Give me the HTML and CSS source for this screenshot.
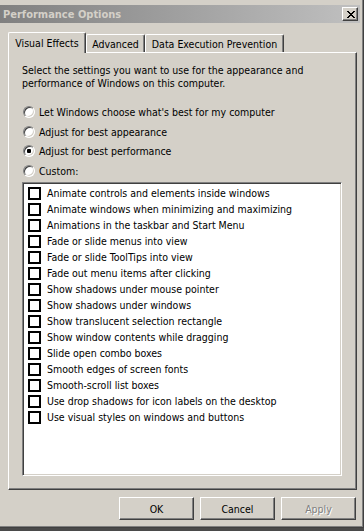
FILE: index.html
```html
<!DOCTYPE html>
<html>
<head>
<title>Performance Options</title>
<link rel="stylesheet" href="styles.css">
</head>
<body>
<div class="window">
	<div class="titlebar">
		<span class="title">Performance Options</span>
		<span class="close"><svg width="8" height="7" viewBox="0 0 8 7" shape-rendering="crispEdges"><path d="M0 0h2v1h-2zM6 0h2v1h-2zM1 1h2v1h-2zM5 1h2v1h-2zM2 2h4v1h-4zM3 3h2v1h-2zM2 4h4v1h-4zM1 5h2v1h-2zM5 5h2v1h-2zM0 6h2v1h-2zM6 6h2v1h-2z" fill="#000"/></svg></span>
	</div>

	<div class="tabs">
		<div class="tab active tab_visual">Visual Effects</div>
		<div class="tab tab_adv">Advanced</div>
		<div class="tab tab_dep">Data Execution Prevention</div>
	</div>

	<div class="panel">
		<p class="intro">Select the settings you want to use for the appearance and<br>performance of Windows on this computer.</p>

		<div class="radios">
			<div class="radio_row"><span class="radio"></span>Let Windows choose what's best for my computer</div>
			<div class="radio_row"><span class="radio"></span>Adjust for best appearance</div>
			<div class="radio_row"><span class="radio checked"></span>Adjust for best performance</div>
			<div class="radio_row"><span class="radio"></span>Custom:</div>
		</div>

		<ul class="effects">
			<li><span class="check"></span>Animate controls and elements inside windows</li>
			<li><span class="check"></span>Animate windows when minimizing and maximizing</li>
			<li><span class="check"></span>Animations in the taskbar and Start Menu</li>
			<li><span class="check"></span>Fade or slide menus into view</li>
			<li><span class="check"></span>Fade or slide ToolTips into view</li>
			<li><span class="check"></span>Fade out menu items after clicking</li>
			<li><span class="check"></span>Show shadows under mouse pointer</li>
			<li><span class="check"></span>Show shadows under windows</li>
			<li><span class="check"></span>Show translucent selection rectangle</li>
			<li><span class="check"></span>Show window contents while dragging</li>
			<li><span class="check"></span>Slide open combo boxes</li>
			<li><span class="check"></span>Smooth edges of screen fonts</li>
			<li><span class="check"></span>Smooth-scroll list boxes</li>
			<li><span class="check"></span>Use drop shadows for icon labels on the desktop</li>
			<li><span class="check"></span>Use visual styles on windows and buttons</li>
		</ul>
	</div>

	<div class="buttons">
		<span class="btn">OK</span>
		<span class="btn">Cancel</span>
		<span class="btn disabled">Apply</span>
	</div>
</div>
<div class="under"></div>
</body>
</html>
```

FILE: styles.css
```css
body{
	margin:0;
	background-color:#d4d0c8;
	font-family:"DejaVu Sans Condensed", "Liberation Sans", Arial, sans-serif;
	font-size:10.5px;
	color:#000;
}
/* dialog frame, the left edge runs off screen */
.window{
	box-sizing:border-box;
	width:364px;
	height:528px;
	padding:5px 3px 0 0;
	border-right:1px solid #404040;
	border-bottom:1px solid #404040;
	box-shadow:inset -1px -1px #808080;
}
.titlebar{
	height:18px;
	display:flex;
	align-items:center;
	justify-content:space-between;
	padding:0 2px 0 3px;
	background:linear-gradient(to right, #808080, #c0c0c0);
}
.title{
	font-weight:bold;
	font-size:11px;
	color:#d4d0c8;
}
.close{
	box-sizing:border-box;
	width:16px;
	height:14px;
	display:flex;
	align-items:center;
	justify-content:center;
	padding-left:1px;
	background-color:#d4d0c8;
	border:1px solid;
	border-color:#fff #404040 #404040 #fff;
	box-shadow:inset -1px -1px #808080;
}

/* tab strip */
.tabs{
	display:flex;
	align-items:flex-end;
	height:20px;
	margin-top:9px;
	padding-left:8px;
}
.tab{
	box-sizing:border-box;
	height:18px;
	padding-top:3px;
	text-align:center;
	line-height:13px;
	border:1px solid;
	border-bottom:none;
	border-color:#fff #404040 #fff #fff;
	border-radius:2px 2px 0 0;
	box-shadow:inset -1px 0 #808080;
}
.tab.active{
	position:relative;
	z-index:1;
	height:21px;
	margin-bottom:-1px;
	padding-top:4px;
	background-color:#d4d0c8;
}
.tab_visual{width:78px;}
.tab_adv{width:59px;}
.tab_dep{width:139px;}

.panel{
	box-sizing:border-box;
	width:349px;
	height:438px;
	margin-left:8px;
	padding:11px 0 0 13px;
	border:1px solid;
	border-color:#fff #404040 #404040 #fff;
	box-shadow:inset -1px -1px #808080;
}
.intro{
	margin:0;
	line-height:13px;
}
.radios{
	margin-top:12px;
}
.radio_row{
	display:flex;
	align-items:center;
	height:19.7px;
}
.radio{
	box-sizing:border-box;
	width:12px;
	height:12px;
	margin:0 4px 0 1px;
	border-radius:50%;
	border:1px solid;
	border-color:#808080 #fff #fff #808080;
	box-shadow:inset 1px 1px #404040, inset -1px -1px #d4d0c8;
	background-color:#fff;
	display:flex;
	align-items:center;
	justify-content:center;
}
.radio.checked::after{
	content:"";
	width:4px;
	height:4px;
	border-radius:1px;
	background-color:#000;
}

/* list of effects */
.effects{
	box-sizing:border-box;
	width:320px;
	height:294px;
	margin:1px 0 0 0;
	padding:2px 0 0 5px;
	list-style:none;
	background-color:#fff;
	border:1px solid;
	border-color:#808080 #fff #fff #808080;
	box-shadow:inset 1px 1px #404040, inset -1px -1px #d4d0c8;
}
.effects li{
	display:flex;
	align-items:center;
	height:16px;
}
.check{
	box-sizing:border-box;
	width:13px;
	height:13px;
	margin:1px 6px 0 0;
	border:2px solid #000;
	background-color:#fff;
}

.buttons{
	display:flex;
	justify-content:flex-end;
	gap:6px;
	width:348px;
	margin:7px 0 0 8px;
}
.btn{
	box-sizing:border-box;
	width:75px;
	height:23px;
	display:flex;
	align-items:center;
	justify-content:center;
	border:1px solid;
	border-color:#fff #404040 #404040 #fff;
	box-shadow:inset -1px -1px #808080;
}
.btn.disabled{
	color:#808080;
	text-shadow:1px 1px #fff;
}
.under{
	height:3px;
	background-color:#4a4a4a;
}
```
